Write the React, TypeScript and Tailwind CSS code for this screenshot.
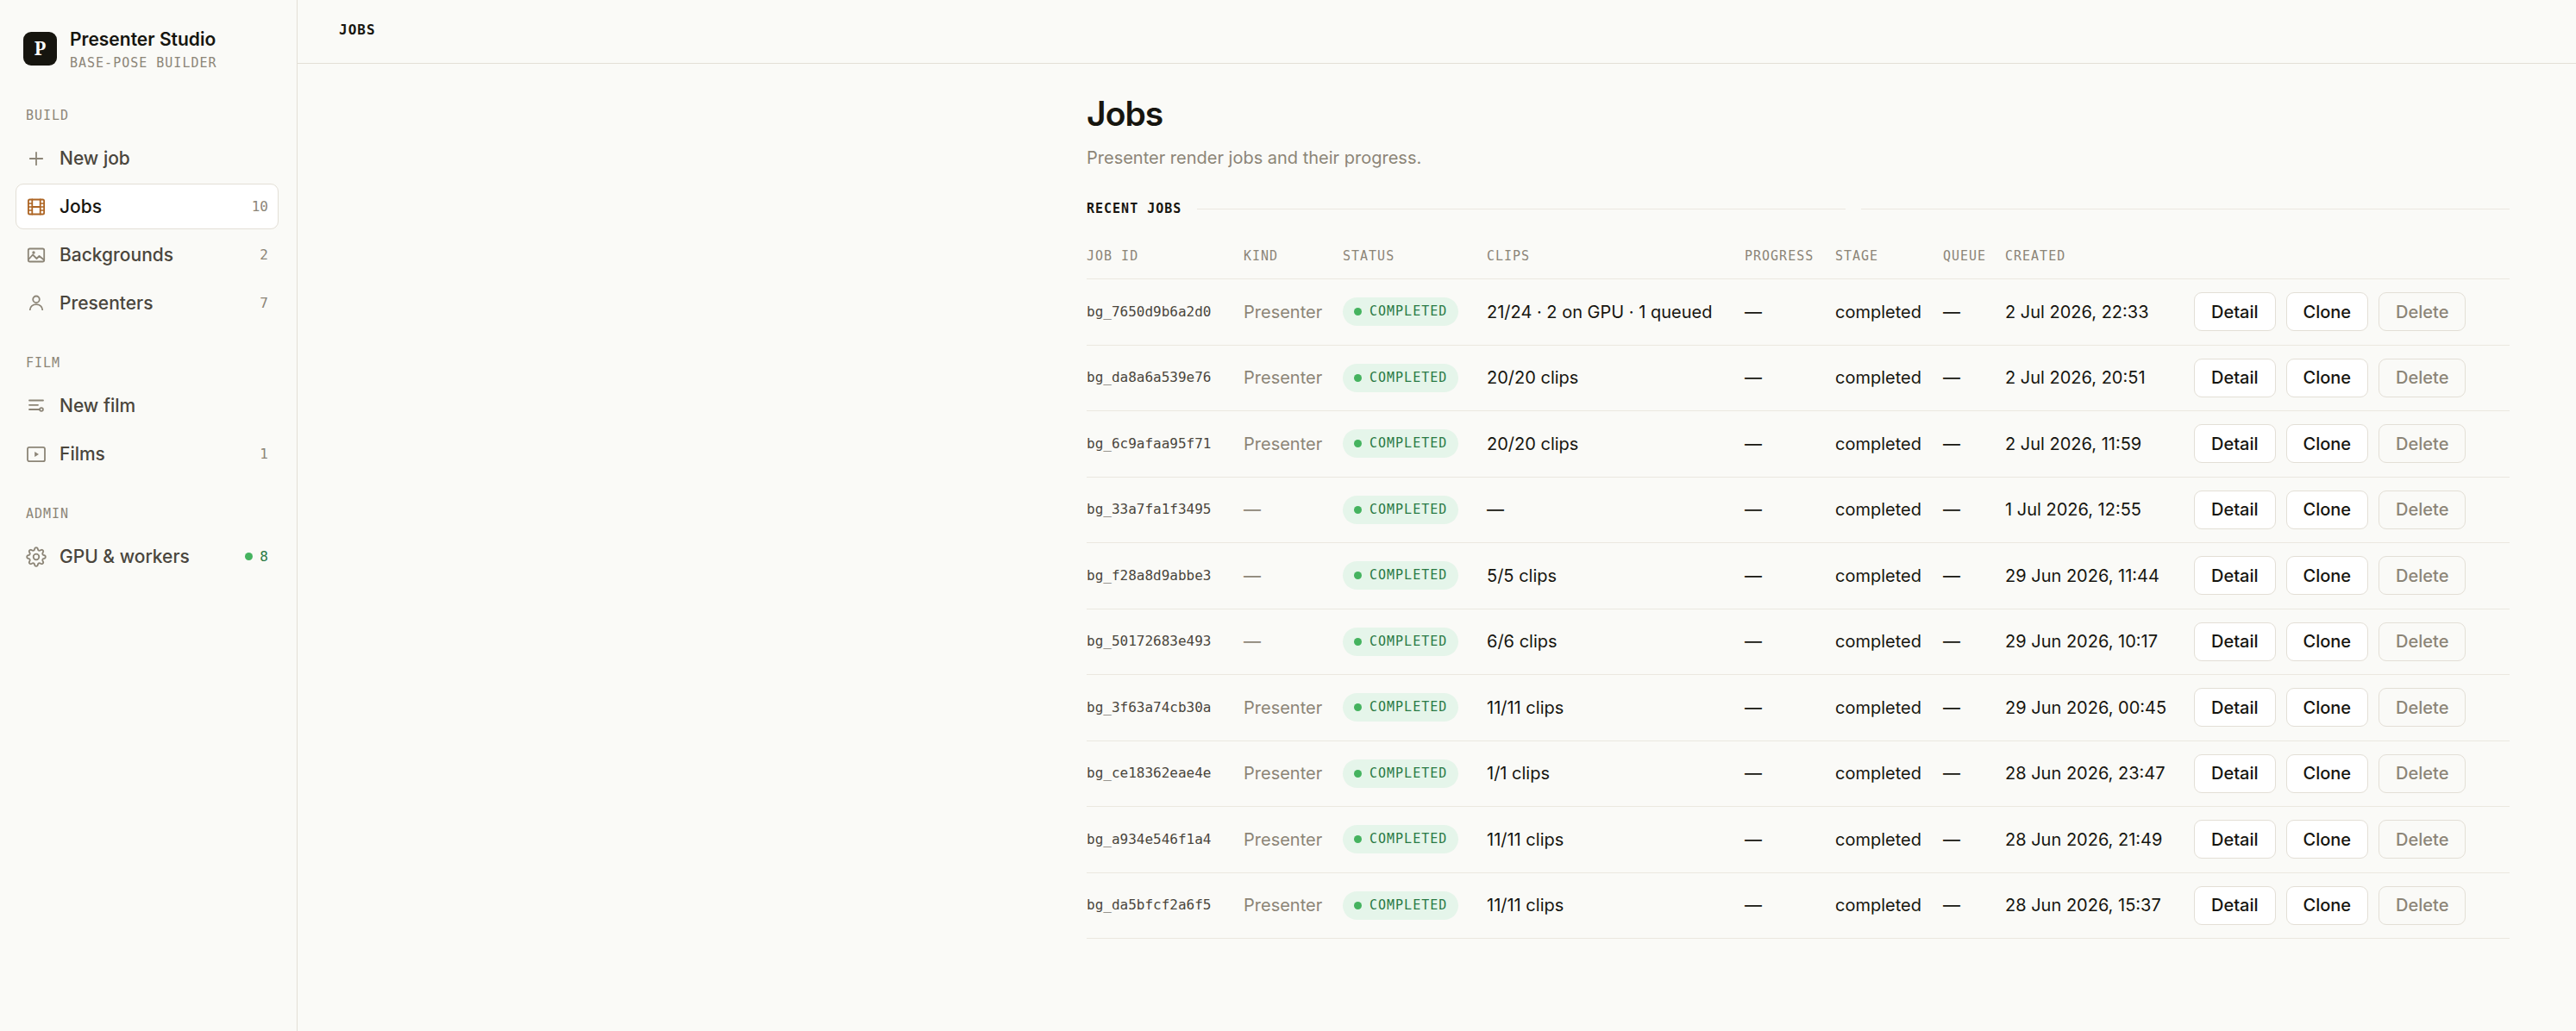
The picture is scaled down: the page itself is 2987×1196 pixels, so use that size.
import React from 'react'

const mono = "font-['DejaVu_Sans_Mono','Liberation_Mono',monospace]"

// eight rounded teeth around the centre of a 24x24 box
const gearPath =
  Array.from({ length: 96 }, (_, i) => {
    const a = (i / 96) * Math.PI * 2
    const r = 9.4 + 1.5 * Math.tanh(1.6 * Math.cos(8 * a))
    return `${i ? 'L' : 'M'}${(12 + r * Math.sin(a)).toFixed(2)} ${(12 - r * Math.cos(a)).toFixed(2)}`
  }).join('') + 'z'

const Icon = ({ name }: { name: string }) => (
  <svg viewBox="0 0 24 24" className="h-6 w-6 shrink-0" fill="none" stroke="currentColor" strokeWidth="1.8" strokeLinecap="round" strokeLinejoin="round" aria-hidden="true">
    {name === 'plus' && <path d="M12 4.8v14.4M4.8 12h14.4" />}
    {name === 'jobs' && (
      <g strokeWidth="1.8">
        <rect x="2.9" y="3.5" width="18.2" height="17" rx="1.6" />
        <path d="M7.3 3.5v17M16.7 3.5v17M7.3 12h9.4" />
        <path d="M3 7.900h4M3 12h4M3 16.100h4M17 7.900h4M17 12h4M17 16.100h4" strokeWidth="1.5" />
      </g>
    )}
    {name === 'image' && (
      <>
        <rect x="2.8" y="4.5" width="18.4" height="15" rx="1.8" />
        <circle cx="9" cy="9" r="0.8" />
        <path d="M3.5 16.5l4.5-5 4.5 4.5 3-3 5.5 4.5" />
      </>
    )}
    {name === 'person' && (
      <>
        <circle cx="12" cy="7.3" r="3.8" />
        <path d="M4.8 19.2c0-3.6 3.2-6 7.2-6s7.2 2.4 7.2 6" />
      </>
    )}
    {name === 'list' && (
      <>
        <path d="M4 5.5h16M4 10.8h10M4 16h12" />
        <circle cx="18" cy="16" r="1.9" />
      </>
    )}
    {name === 'play' && (
      <>
        <rect x="2" y="3.8" width="20" height="16.4" rx="2" />
        <path d="M10.2 9v6l4.8-3z" fill="currentColor" stroke="none" />
      </>
    )}
    {name === 'gear' && (
      <>
        <circle cx="12" cy="12" r="3.3" />
        <path d={gearPath} />
      </>
    )}
  </svg>
)

const groups = [
  {
    title: 'Build',
    items: [
      { icon: 'plus', label: 'New job' },
      { icon: 'jobs', label: 'Jobs', count: 10, active: true },
      { icon: 'image', label: 'Backgrounds', count: 2 },
      { icon: 'person', label: 'Presenters', count: 7 },
    ],
  },
  {
    title: 'Film',
    items: [
      { icon: 'list', label: 'New film' },
      { icon: 'play', label: 'Films', count: 1 },
    ],
  },
  {
    title: 'Admin',
    items: [{ icon: 'gear', label: 'GPU & workers', count: 8, online: true }],
  },
] as { title: string; items: { icon: string; label: string; count?: number; active?: boolean; online?: boolean }[] }[]

const jobs = [
  { id: 'bg_7650d9b6a2d0', kind: 'Presenter', clips: '21/24 · 2 on GPU · 1 queued', created: '2 Jul 2026, 22:33' },
  { id: 'bg_da8a6a539e76', kind: 'Presenter', clips: '20/20 clips', created: '2 Jul 2026, 20:51' },
  { id: 'bg_6c9afaa95f71', kind: 'Presenter', clips: '20/20 clips', created: '2 Jul 2026, 11:59' },
  { id: 'bg_33a7fa1f3495', kind: '—', clips: '—', created: '1 Jul 2026, 12:55' },
  { id: 'bg_f28a8d9abbe3', kind: '—', clips: '5/5 clips', created: '29 Jun 2026, 11:44' },
  { id: 'bg_50172683e493', kind: '—', clips: '6/6 clips', created: '29 Jun 2026, 10:17' },
  { id: 'bg_3f63a74cb30a', kind: 'Presenter', clips: '11/11 clips', created: '29 Jun 2026, 00:45' },
  { id: 'bg_ce18362eae4e', kind: 'Presenter', clips: '1/1 clips', created: '28 Jun 2026, 23:47' },
  { id: 'bg_a934e546f1a4', kind: 'Presenter', clips: '11/11 clips', created: '28 Jun 2026, 21:49' },
  { id: 'bg_da5bfcf2a6f5', kind: 'Presenter', clips: '11/11 clips', created: '28 Jun 2026, 15:37' },
]

const Sidebar = () => {
  return (
    <aside className="flex w-[345px] shrink-0 flex-col border-r border-[#e3dfd6] pt-[29px] pr-[21px] pl-[18px]">
      <div className="flex items-center gap-[15px] px-[9px]">
        <div className="flex h-[39px] w-[39px] items-center justify-center rounded-[9px] bg-[#16150f] font-['Noto_Serif','Liberation_Serif',serif] text-[21px] font-bold text-white">P</div>
        <div className="flex flex-col gap-[3px] pt-[3px]">
          <span className="text-[21px] leading-[27px] font-semibold">Presenter Studio</span>
          <span className={`${mono} text-[15px] leading-[22px] tracking-[1px] text-[#8c8577]`}>BASE-POSE BUILDER</span>
        </div>
      </div>

      {groups.map((group) => (
        <nav key={group.title} className="mt-[33px] flex flex-col first-of-type:mt-10" aria-label={group.title}>
          <h2 className={`${mono} mb-[13px] px-3 text-[15px] leading-5 tracking-[1px] text-[#8c8577] uppercase`}>{group.title}</h2>
          <div className="flex flex-col gap-[3px]">
            {group.items.map((item) => (
              <a
                key={item.label}
                href="#"
                className={`flex h-[53px] items-center gap-[15px] rounded-[9px] border px-[11px] text-[21px] font-medium ${item.active ? 'border-[#e3dfd6] bg-white text-[#16150f]' : 'border-transparent text-[#4a463d]'}`}
              >
                <span className={item.active ? 'text-[#ad6524]' : 'text-[#8c8577]'}><Icon name={item.icon} /></span>
                <span className="flex-1">{item.label}</span>
                {item.online && <span className="-mr-[7px] h-[9px] w-[9px] rounded-full bg-[#45b35f]" />}
                {item.count && <span className={`${mono} text-[16px] font-normal ${item.online ? 'text-[#2a7a45]' : 'text-[#8c8577]'}`}>{item.count}</span>}
              </a>
            ))}
          </div>
        </nav>
      ))}
    </aside>
  )
}

const JobsTable = () => {
  return (
    <table className="w-full table-fixed text-left text-[20px]">
      <colgroup>
        <col className="w-[182px]" />
        <col className="w-[115px]" />
        <col className="w-[167px]" />
        <col className="w-[299px]" />
        <col className="w-[105px]" />
        <col className="w-[125px]" />
        <col className="w-[72px]" />
        <col className="w-[219px]" />
        <col className="w-[366px]" />
      </colgroup>
      <thead>
        <tr className={`${mono} h-[55px] border-b border-[#ebe8e0] align-bottom text-[15px] leading-5 tracking-[1px] text-[#8c8577] uppercase`}>
          <th className="pb-4 font-normal">Job ID</th>
          <th className="pb-4 font-normal">Kind</th>
          <th className="pb-4 font-normal">Status</th>
          <th className="pb-4 font-normal">Clips</th>
          <th className="pb-4 font-normal">Progress</th>
          <th className="pb-4 font-normal">Stage</th>
          <th className="pb-4 font-normal">Queue</th>
          <th className="pb-4 font-normal">Created</th>
          <th aria-label="Actions" />
        </tr>
      </thead>
      <tbody>
        {jobs.map((job) => (
          <tr key={job.id} className="h-[77px] border-b border-[#ebe8e0] whitespace-nowrap even:h-[76px]">
            <td className={`${mono} text-[16px] text-[#4a463d]`}>{job.id}</td>
            <td className="text-[#8c8577]">{job.kind}</td>
            <td>
              <span className={`${mono} flex h-[33px] w-fit items-center gap-[9px] rounded-full bg-[#e5f5ea] px-[13px] text-[15px] tracking-[1px] text-[#2a7a45]`}>
                <span className="h-[9px] w-[9px] rounded-full bg-[#45b35f]" />
                COMPLETED
              </span>
            </td>
            <td>{job.clips}</td>
            <td>—</td>
            <td>completed</td>
            <td>—</td>
            <td>{job.created}</td>
            <td>
              <div className="flex gap-3">
                <button className="h-[45px] rounded-[9px] border border-[#e3dfd6] bg-white px-[19px] font-medium">Detail</button>
                <button className="h-[45px] rounded-[9px] border border-[#e3dfd6] bg-white px-[19px] font-medium">Clone</button>
                <button className="h-[45px] rounded-[9px] border border-[#e3dfd6] px-[19px] font-medium text-[#8c8577]">Delete</button>
              </div>
            </td>
          </tr>
        ))}
      </tbody>
    </table>
  )
}

const App = () => {
  return (
    <div className="flex min-h-screen bg-[#fafaf7] font-['Inter',sans-serif] text-[#16150f]">
      <Sidebar />
      <main className="flex min-w-0 flex-1 flex-col">
        <header className="flex h-[74px] items-center border-b border-[#e3dfd6] px-12 pb-1">
          <span className={`${mono} text-[16px] font-bold tracking-[1px]`}>JOBS</span>
        </header>
        <section className="mr-[77px] ml-auto w-full max-w-[1650px] pt-[34px]">
          <h1 className="text-[39px] leading-[48px] font-semibold tracking-tight">Jobs</h1>
          <p className="mt-3 text-[20px] leading-[30px] text-[#8c8577]">Presenter render jobs and their progress.</p>
          <div className="mt-8 mb-[14px] flex items-center gap-[18px]">
            <h2 className={`${mono} text-[15px] leading-6 font-bold tracking-[1px]`}>RECENT JOBS</h2>
            <span className="h-px flex-1 bg-[#ebe8e0]" />
            <span className="h-px flex-1 bg-[#ebe8e0]" />
          </div>
          <JobsTable />
        </section>
      </main>
    </div>
  )
}

export default App
